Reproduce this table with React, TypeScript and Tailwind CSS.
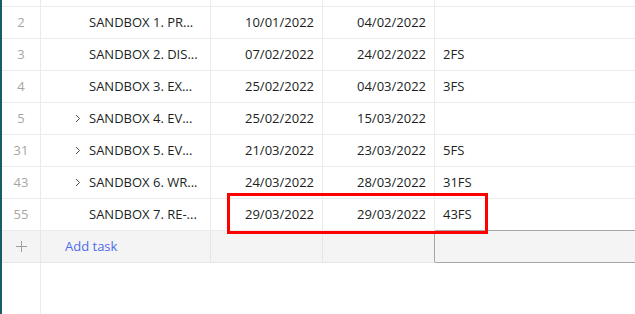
import React from "react";

type Row = { n: string; name: string; start: string; end: string; pred: string; chevron: boolean };

const rows: Row[] = [
  { n: "2", name: "SANDBOX 1. PR...", start: "10/01/2022", end: "04/02/2022", pred: "", chevron: false },
  { n: "3", name: "SANDBOX 2. DIS...", start: "07/02/2022", end: "24/02/2022", pred: "2FS", chevron: false },
  { n: "4", name: "SANDBOX 3. EX...", start: "25/02/2022", end: "04/03/2022", pred: "3FS", chevron: false },
  { n: "5", name: "SANDBOX 4. EV...", start: "25/02/2022", end: "15/03/2022", pred: "", chevron: true },
  { n: "31", name: "SANDBOX 5. EV...", start: "21/03/2022", end: "23/03/2022", pred: "5FS", chevron: true },
  { n: "43", name: "SANDBOX 6. WR...", start: "24/03/2022", end: "28/03/2022", pred: "31FS", chevron: true },
  { n: "55", name: "SANDBOX 7. RE-...", start: "29/03/2022", end: "29/03/2022", pred: "43FS", chevron: false },
];

function Chevron() {
  return (
    <svg width="6" height="9" viewBox="0 0 6 9" className="mr-[8px]">
      <path d="M1 1 L4.5 4.5 L1 8" fill="none" stroke="#444" strokeWidth="1" />
    </svg>
  );
}

export default function App() {
  return (
    <div
      className="relative w-[635px] h-[314px] overflow-hidden bg-white border-l-2 border-[#1a5c62] text-[13px] text-[#201f1e]"
      style={{ fontFamily: '"Open Sans", "Noto Sans", sans-serif' }}
    >
      <div className="flex h-[7px] border-b border-[#ebebeb]">
        <div className="w-[39px] border-r border-[#ebebeb]" />
        <div className="w-[170px] border-r border-[#ebebeb]" />
        <div className="w-[112px] border-r border-[#ebebeb]" />
        <div className="w-[112px] border-r border-[#ebebeb]" />
        <div className="flex-1" />
      </div>
      {rows.map((r, i) => {
        const last = i === rows.length - 1;
        return (
          <div key={r.n} className="flex h-[32px] border-b border-[#ebebeb]">
            <div className="w-[39px] border-r border-[#ebebeb] flex items-center justify-center text-[#a8a6a4]">{r.n}</div>
            <div className="w-[170px] border-r border-[#ebebeb] flex items-center pl-[34px]">
              <div className="w-[14px] flex items-center">{r.chevron ? <Chevron /> : null}</div>
              <span>{r.name}</span>
            </div>
            <div className="w-[112px] border-r border-[#ebebeb] flex items-center justify-end pr-[8px]">{r.start}</div>
            <div className="w-[112px] border-r border-[#ebebeb] flex items-center justify-end pr-[8px]">{r.end}</div>
            <div className={"flex-1 flex items-center pl-[8px] " + (last ? "border-b border-[#a6a6a6] -mb-px" : "")}>{r.pred}</div>
          </div>
        );
      })}
      <div className="flex h-[32px] bg-[#f4f4f4] border-b border-[#e6e6e6]">
        <div className="w-[39px] border-r border-[#e6e6e6] flex items-center justify-center">
          <svg width="11" height="11" viewBox="0 0 11 11">
            <path d="M5.5 0 V11 M0 5.5 H11" stroke="#9e9e9e" strokeWidth="1" />
          </svg>
        </div>
        <div className="w-[170px] border-r border-[#e6e6e6] flex items-center pl-[24px] text-[#4f6bed]">Add task</div>
        <div className="w-[112px] border-r border-[#e6e6e6]" />
        <div className="w-[112px] border-r border-[#a6a6a6]" />
        <div className="flex-1 border-b border-[#a6a6a6] -mb-px" />
      </div>
      <div className="flex h-[60px]">
        <div className="w-[39px] border-r border-[#ebebeb]" />
      </div>
      <div className="absolute left-[225px] top-[193px] w-[261px] h-[41px] border-[3px] border-[#ff0000]" />
    </div>
  );
}
